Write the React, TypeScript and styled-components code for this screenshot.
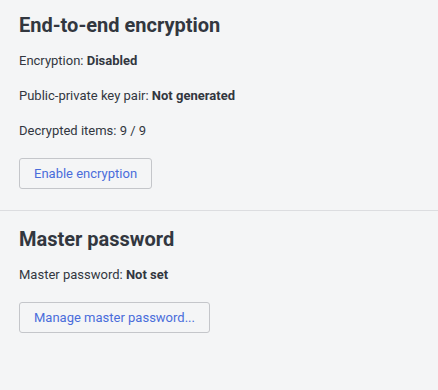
import React from "react";
import styled, { createGlobalStyle } from "styled-components";

const GlobalStyle = createGlobalStyle`
  html, body {
    margin: 0;
    padding: 0;
    background: #f4f5f6;
  }

  body {
    font-family: Roboto, "Liberation Sans", sans-serif;
    color: #32373f;
  }
`;

const Root = styled.div`
  padding-top: 13px;
`;

const Section = styled.section<{ $divided?: boolean }>`
  padding: ${({ $divided }) => ($divided ? "16px" : "0")} 0 21px 19px;
  border-top: ${({ $divided }) => ($divided ? "1px solid #dcdde0" : "none")};
`;

const Title = styled.h2`
  margin: 0 0 16px;
  font-size: 20px;
  line-height: 24px;
  font-weight: 700;
  color: #32373f;
`;

const Info = styled.p`
  margin: 0 0 19px;
  font-size: 13px;
  line-height: 16px;
  color: #32373f;

  strong {
    font-weight: 700;
  }
`;

const Button = styled.button<{ $gap?: number }>`
  display: block;
  margin-top: ${({ $gap }) => $gap ?? 0}px;
  padding: 6px 14px;
  font-family: Roboto, "Liberation Sans", sans-serif;
  font-size: 13px;
  line-height: 17px;
  color: #4a6ddb;
  background: transparent;
  border: 1px solid #c4c6ca;
  border-radius: 3px;
  cursor: pointer;
`;

const App: React.FunctionComponent = (): React.ReactElement => {
  return (
    <Root>
      <GlobalStyle />
      <Section>
        <Title>End-to-end encryption</Title>
        <Info>
          Encryption: <strong>Disabled</strong>
        </Info>
        <Info>
          Public-private key pair: <strong>Not generated</strong>
        </Info>
        <Info>Decrypted items: 9 / 9</Info>
        <Button>Enable encryption</Button>
      </Section>
      <Section $divided>
        <Title>Master password</Title>
        <Info>
          Master password: <strong>Not set</strong>
        </Info>
        <Button $gap={1}>Manage master password...</Button>
      </Section>
    </Root>
  );
};

export default App;
